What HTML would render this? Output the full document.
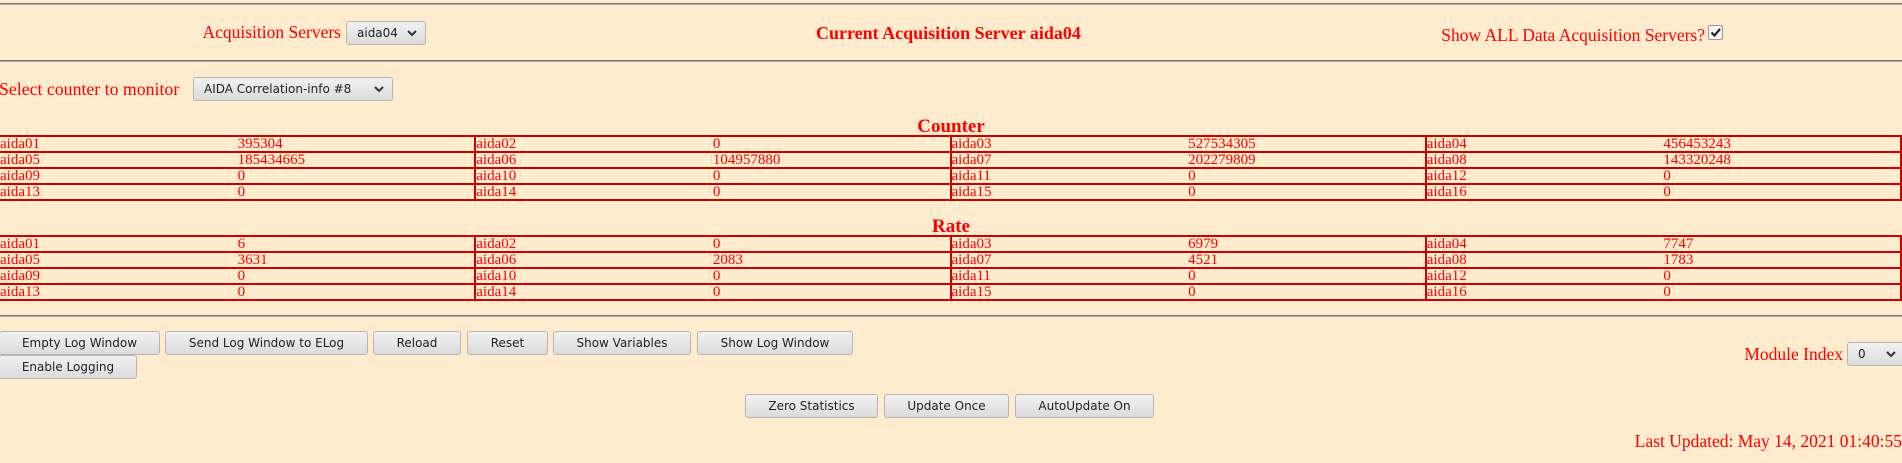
<!DOCTYPE html>
<html><head><style>
html,body{margin:0;padding:0;width:1902px;height:463px;overflow:hidden;background:#ffebcd;position:relative}
.s{position:absolute;font-family:"Liberation Serif",serif;color:#f00;white-space:nowrap;font-size:17.5px}
.hr{position:absolute;left:0;width:1902px;height:1px;background:#777;border-bottom:1px solid #aaa}
.btn{position:absolute;box-sizing:border-box;border:1px solid #b5b5b5;border-radius:3px;background:linear-gradient(#f2f2f2,#dcdcdc);font-family:"DejaVu Sans",sans-serif;font-size:12px;color:#222;text-align:center;line-height:22px;height:24px}
.sel{text-align:left;padding-left:10px}
.sel svg{position:absolute;right:8px;top:8px}
.tb{position:absolute;left:0;width:1902px;border-collapse:collapse;table-layout:fixed}
.tb td{border:2px solid #c00;border-left:none;border-right:none;height:14px;padding:0;font-family:"Liberation Serif",serif;font-size:15px;line-height:14px;color:#f00;white-space:nowrap;overflow:visible}
.tb td span{position:relative;top:1px}
.tb td.b{border-left:2px solid #c00}
.tb td.e{border-right:2px solid #c00}
.h{position:absolute;left:0;width:1902px;text-align:center;font-family:"Liberation Serif",serif;font-weight:bold;font-size:19px;color:#f00}
</style></head><body>
<div class="hr" style="top:3px"></div>
<div class="s" style="right:1561px;top:22px">Acquisition Servers</div>
<div class="btn sel" style="left:346px;top:21px;width:80px">aida04<svg width="10" height="7"><path d="M1 1L5 5L9 1" stroke="#333" stroke-width="2" fill="none"/></svg></div>
<div class="s" style="left:816px;top:23px;font-size:18px;font-weight:bold">Current Acquisition Server aida04</div>
<div class="s" style="right:197px;top:25px">Show ALL Data Acquisition Servers?</div>
<div style="position:absolute;left:1708px;top:25px;width:13px;height:13px;border:1px solid #999;border-radius:2px;background:#f4f4f4"><svg width="13" height="13" style="position:absolute;left:0;top:0"><path d="M2.5 6.5L5.5 9.5L11 3" stroke="#222" stroke-width="2.2" fill="none"/></svg></div>
<div class="hr" style="top:60px"></div>
<div class="s" style="left:-1px;top:79px;font-size:17.8px">Select counter to monitor</div>
<div class="btn sel" style="left:193px;top:77px;width:200px">AIDA Correlation-info #8<svg width="10" height="7"><path d="M1 1L5 5L9 1" stroke="#333" stroke-width="2" fill="none"/></svg></div>
<div class="h" style="top:116px">Counter</div>
<table class="tb" style="top:135px">
<colgroup><col><col><col><col><col><col><col><col></colgroup>
<tr><td>aida01</td><td>395304</td><td class="b">aida02</td><td>0</td><td class="b">aida03</td><td>527534305</td><td class="b">aida04</td><td class="e">456453243</td></tr>
<tr><td>aida05</td><td>185434665</td><td class="b">aida06</td><td>104957880</td><td class="b">aida07</td><td>202279809</td><td class="b">aida08</td><td class="e">143320248</td></tr>
<tr><td>aida09</td><td>0</td><td class="b">aida10</td><td>0</td><td class="b">aida11</td><td>0</td><td class="b">aida12</td><td class="e">0</td></tr>
<tr><td>aida13</td><td>0</td><td class="b">aida14</td><td>0</td><td class="b">aida15</td><td>0</td><td class="b">aida16</td><td class="e">0</td></tr>
</table>
<div class="h" style="top:216px">Rate</div>
<table class="tb" style="top:235px">
<colgroup><col><col><col><col><col><col><col><col></colgroup>
<tr><td>aida01</td><td>6</td><td class="b">aida02</td><td>0</td><td class="b">aida03</td><td>6979</td><td class="b">aida04</td><td class="e">7747</td></tr>
<tr><td>aida05</td><td>3631</td><td class="b">aida06</td><td>2083</td><td class="b">aida07</td><td>4521</td><td class="b">aida08</td><td class="e">1783</td></tr>
<tr><td>aida09</td><td>0</td><td class="b">aida10</td><td>0</td><td class="b">aida11</td><td>0</td><td class="b">aida12</td><td class="e">0</td></tr>
<tr><td>aida13</td><td>0</td><td class="b">aida14</td><td>0</td><td class="b">aida15</td><td>0</td><td class="b">aida16</td><td class="e">0</td></tr>
</table>
<div class="hr" style="top:315px"></div>
<div class="btn" style="left:-1px;top:331px;width:161px">Empty Log Window</div>
<div class="btn" style="left:165px;top:331px;width:203px">Send Log Window to ELog</div>
<div class="btn" style="left:373px;top:331px;width:88px">Reload</div>
<div class="btn" style="left:467px;top:331px;width:81px">Reset</div>
<div class="btn" style="left:553px;top:331px;width:138px">Show Variables</div>
<div class="btn" style="left:697px;top:331px;width:156px">Show Log Window</div>
<div class="btn" style="left:-1px;top:355px;width:138px">Enable Logging</div>
<div class="s" style="right:59px;top:344px">Module Index</div>
<div class="btn sel" style="left:1847px;top:342px;width:58px">0<svg width="10" height="7"><path d="M1 1L5 5L9 1" stroke="#333" stroke-width="2" fill="none"/></svg></div>
<div class="btn" style="left:745px;top:394px;width:133px">Zero Statistics</div>
<div class="btn" style="left:884px;top:394px;width:125px">Update Once</div>
<div class="btn" style="left:1015px;top:394px;width:139px">AutoUpdate On</div>
<div class="s" style="right:0;top:431px">Last Updated: May 14, 2021 01:40:55</div>
</body></html>
